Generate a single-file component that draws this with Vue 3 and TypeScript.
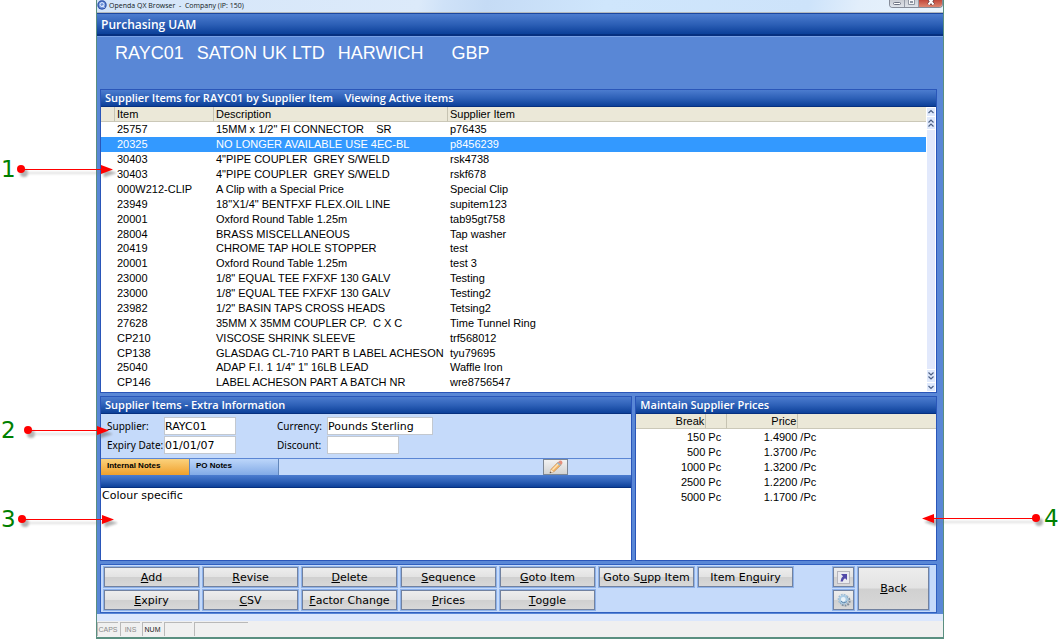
<script setup lang="ts">
import { ref } from 'vue'

interface Item { code: string; description: string; supplierItem: string }
interface PriceBreak { qty: string; price: string }
interface Action { id: string; before: string; key: string; after: string }
interface Callout { label: string; cls: string; length: number; reverse: boolean }

const items: Item[] = [
  { code: '25757', description: '15MM x 1/2" FI CONNECTOR    SR', supplierItem: 'p76435' },
  { code: '20325', description: 'NO LONGER AVAILABLE USE 4EC-BL', supplierItem: 'p8456239' },
  { code: '30403', description: '4"PIPE COUPLER  GREY S/WELD', supplierItem: 'rsk4738' },
  { code: '30403', description: '4"PIPE COUPLER  GREY S/WELD', supplierItem: 'rskf678' },
  { code: '000W212-CLIP', description: 'A Clip with a Special Price', supplierItem: 'Special Clip' },
  { code: '23949', description: '18"X1/4" BENTFXF FLEX.OIL LINE', supplierItem: 'supitem123' },
  { code: '20001', description: 'Oxford Round Table 1.25m', supplierItem: 'tab95gt758' },
  { code: '28004', description: 'BRASS MISCELLANEOUS', supplierItem: 'Tap washer' },
  { code: '20419', description: 'CHROME TAP HOLE STOPPER', supplierItem: 'test' },
  { code: '20001', description: 'Oxford Round Table 1.25m', supplierItem: 'test 3' },
  { code: '23000', description: '1/8" EQUAL TEE FXFXF 130 GALV', supplierItem: 'Testing' },
  { code: '23000', description: '1/8" EQUAL TEE FXFXF 130 GALV', supplierItem: 'Testing2' },
  { code: '23982', description: '1/2" BASIN TAPS CROSS HEADS', supplierItem: 'Tetsing2' },
  { code: '27628', description: '35MM X 35MM COUPLER CP.  C X C', supplierItem: 'Time Tunnel Ring' },
  { code: 'CP210', description: 'VISCOSE SHRINK SLEEVE', supplierItem: 'trf568012' },
  { code: 'CP138', description: 'GLASDAG CL-710 PART B LABEL ACHESON', supplierItem: 'tyu79695' },
  { code: '25040', description: 'ADAP F.I. 1 1/4" 1" 16LB LEAD', supplierItem: 'Waffle Iron' },
  { code: 'CP146', description: 'LABEL ACHESON PART A BATCH NR', supplierItem: 'wre8756547' },
]

const prices: PriceBreak[] = [
  { qty: '150', price: '1.4900' },
  { qty: '500', price: '1.3700' },
  { qty: '1000', price: '1.3200' },
  { qty: '2500', price: '1.2200' },
  { qty: '5000', price: '1.1700' },
]

const actions: Action[] = [
  { id: 'add', before: '', key: 'A', after: 'dd' },
  { id: 'revise', before: '', key: 'R', after: 'evise' },
  { id: 'delete', before: '', key: 'D', after: 'elete' },
  { id: 'sequence', before: '', key: 'S', after: 'equence' },
  { id: 'goto-item', before: '', key: 'G', after: 'oto Item' },
  { id: 'goto-supp', before: 'Goto S', key: 'u', after: 'pp Item' },
  { id: 'enquiry', before: 'Item En', key: 'q', after: 'uiry' },
  { id: 'expiry', before: '', key: 'E', after: 'xpiry' },
  { id: 'csv', before: '', key: 'C', after: 'SV' },
  { id: 'factor', before: '', key: 'F', after: 'actor Change' },
  { id: 'prices', before: '', key: 'P', after: 'rices' },
  { id: 'toggle', before: '', key: 'T', after: 'oggle' },
]

const callouts: Callout[] = [
  { label: '1', cls: 'c1', length: 92, reverse: false },
  { label: '2', cls: 'c2', length: 81, reverse: false },
  { label: '3', cls: 'c3', length: 92, reverse: false },
  { label: '4', cls: 'c4', length: 114, reverse: true },
]

const selected = ref(1)
const tab = ref<'internal' | 'po'>('internal')
const supplier = ref('RAYC01')
const expiry = ref('01/01/07')
const currency = ref('Pounds Sterling')
const discount = ref('')
const notes = ref('Colour specific')
</script>

<template>
  <div class="page">
    <div class="window">
      <header class="titlebar">
        <svg class="logo" width="10" height="10" viewBox="0 0 10 10" aria-hidden="true">
          <circle cx="5" cy="5" r="4.7" fill="#2d50a8" />
          <circle cx="5" cy="5" r="3.4" fill="#6d92d8" />
          <path d="M3 4.6a2 2 0 1 0 4 0a2 2 0 1 0 -4 0M5.3 5.4L7.4 7.8" fill="none" stroke="#e4edff" />
        </svg>
        <span class="caption">Openda QX Browser&nbsp; -&nbsp; Company (IP: 150)</span>
        <div class="controls">
          <button type="button" class="ctl min" aria-label="Minimise">
            <svg width="14" height="7" viewBox="0 0 14 7"><rect x="3.5" y="2.5" width="7" height="2" rx="1" fill="#fff" stroke="#6b7180" /></svg>
          </button>
          <button type="button" class="ctl max" aria-label="Maximise">
            <svg width="13" height="7" viewBox="0 0 13 7"><path d="M3.500 0V4.500H9.500V0" fill="#f5f6f8" stroke="#8f96a3" /><rect x="5.500" y="1.500" width="2" height="1" fill="none" stroke="#8f96a3" /></svg>
          </button>
          <button type="button" class="ctl close" aria-label="Close">
            <svg width="23" height="7" viewBox="0 0 23 7"><path d="M9.500 -1.500L14.500 4.500M14.500 -1.500L9.500 4.500" stroke="#5b3038" stroke-width="3.400" /><path d="M9.500 -1.500L14.500 4.500M14.500 -1.500L9.500 4.500" stroke="#fff" stroke-width="2" /></svg>
          </button>
        </div>
      </header>

      <main class="client">
        <h1 class="bar main-bar">Purchasing UAM</h1>
        <p class="account"><span>RAYC01</span><span>SATON UK LTD</span><span>HARWICH</span><span class="code">GBP</span></p>

        <div class="body">
          <section class="panel">
            <h2 class="bar">Supplier Items for RAYC01 by Supplier Item&nbsp;&nbsp;&nbsp; Viewing Active items</h2>
            <div class="list">
              <table class="grid items">
                <colgroup><col class="w-gutter" /><col class="w-item" /><col class="w-desc" /><col /></colgroup>
                <thead>
                  <tr><th></th><th>Item</th><th>Description</th><th>Supplier Item</th></tr>
                </thead>
                <tbody>
                  <tr v-for="(row, i) in items" :key="i" :class="{ selected: i === selected }" @click="selected = i">
                    <td></td><td>{{ row.code }}</td><td>{{ row.description }}</td><td>{{ row.supplierItem }}</td>
                  </tr>
                </tbody>
              </table>
              <div class="scroll">
                <button type="button" aria-label="Scroll up"><svg width="8" height="8" viewBox="0 0 8 8"><path d="M1.500 5L4 2.500L6.500 5" /></svg></button>
                <button type="button" class="page-btn" aria-label="Page up"><svg width="8" height="10" viewBox="0 0 8 10"><path d="M1.500 4.500L4 2L6.500 4.500M1.500 8.500L4 6L6.500 8.500" /></svg></button>
                <div class="track"></div>
                <button type="button" class="page-btn" aria-label="Page down"><svg width="8" height="10" viewBox="0 0 8 10"><path d="M1.500 1.500L4 4L6.500 1.500M1.500 5.500L4 8L6.500 5.500" /></svg></button>
                <button type="button" aria-label="Scroll down"><svg width="8" height="8" viewBox="0 0 8 8"><path d="M1.500 3L4 5.500L6.500 3" /></svg></button>
              </div>
            </div>
          </section>

          <div class="lower">
            <section class="panel extra">
              <h2 class="bar">Supplier Items - Extra Information</h2>
              <form class="fields" @submit.prevent>
                <label for="supplier">Supplier:</label><input id="supplier" v-model="supplier" class="short" type="text" />
                <label for="currency">Currency:</label><input id="currency" v-model="currency" type="text" />
                <label for="expiry">Expiry Date:</label><input id="expiry" v-model="expiry" class="short" type="text" />
                <label for="discount">Discount:</label><input id="discount" v-model="discount" class="short" type="text" />
              </form>
              <div class="tabs">
                <button type="button" class="tab" :class="{ active: tab === 'internal' }" @click="tab = 'internal'">Internal Notes</button>
                <button type="button" class="tab" :class="{ active: tab === 'po' }" @click="tab = 'po'">PO Notes</button>
                <button type="button" class="edit" aria-label="Edit notes">
                  <svg width="16" height="14" viewBox="0 0 16 14">
                    <path d="M2 13L3.200 9.200L10 2.200L13.200 4.800L6 11.600Z" fill="#f5b768" stroke="#c98a4a" stroke-width=".7" />
                    <path d="M4.500 9.800L11 3.200" stroke="#fde3b4" stroke-width="1.500" />
                    <path d="M2 13L3 9.600L5.600 11.700Z" fill="#f2e3cf" />
                    <path d="M1.700 13.200L2.300 11.600L3.600 12.600Z" fill="#4a4a50" />
                    <path d="M10 2.200L11.600 .8Q13 .2 14 1.300Q14.800 2.600 14.200 3.800L13.200 4.800Z" fill="#e58f7c" />
                    <path d="M9.400 2.800L12.600 5.400" stroke="#8fb6d4" stroke-width="1.300" />
                  </svg>
                </button>
              </div>
              <div class="bar notes-bar"></div>
              <textarea v-model="notes" class="notes" aria-label="Notes"></textarea>
            </section>

            <section class="panel">
              <h2 class="bar">Maintain Supplier Prices</h2>
              <div class="price-list">
                <table class="grid prices">
                  <colgroup><col class="w-break" /><col class="w-unit" /><col class="w-price" /><col /></colgroup>
                  <thead>
                    <tr><th class="num">Break</th><th></th><th class="num">Price</th><th></th></tr>
                  </thead>
                  <tbody>
                    <tr v-for="p in prices" :key="p.qty">
                      <td class="num">{{ p.qty }}</td><td>Pc</td><td class="num">{{ p.price }}</td><td>/Pc</td>
                    </tr>
                  </tbody>
                </table>
              </div>
            </section>
          </div>

          <section class="panel toolbar">
            <div class="actions">
              <button v-for="a in actions" :key="a.id" type="button" class="btn">{{ a.before }}<u>{{ a.key }}</u>{{ a.after }}</button>
            </div>
            <div class="tools">
              <button type="button" class="btn" aria-label="Shortcut">
                <svg width="13" height="13" viewBox="0 0 13 13">
                  <rect x=".5" y=".5" width="12" height="12" fill="#e9e9ef" stroke="#b5b5bd" />
                  <path d="M4 3H10V9L8 7.200Q6.200 8.200 5.800 10.500H3.500Q3.400 7 6 5.200Z" fill="#5148a8" />
                </svg>
              </button>
              <button type="button" class="btn" aria-label="Settings">
                <svg width="14" height="14" viewBox="0 0 14 14">
                  <circle cx="8" cy="8" r="4.600" fill="none" stroke="#7f8f9f" stroke-width="2" stroke-dasharray="1.800 1" />
                  <circle cx="6.300" cy="6.300" r="4.800" fill="none" stroke="#9dbcd6" stroke-width="1.600" stroke-dasharray="1.800 1" />
                  <circle cx="6.300" cy="6.300" r="3.400" fill="#eaf3f9" stroke="#a9cbe4" stroke-width="2" />
                  <path d="M4 8a3.400 3.400 0 0 0 5.600 .4" fill="none" stroke="#5f86aa" />
                </svg>
              </button>
            </div>
            <button type="button" class="btn back"><span><u>B</u>ack</span></button>
          </section>
        </div>
      </main>

      <footer class="status">
        <span class="cell caps">CAPS</span><span class="cell">INS</span><span class="cell on">NUM</span>
        <span class="cell blank"></span><span class="cell wide"></span>
      </footer>
    </div>

    <div v-for="c in callouts" :key="c.label" class="callout" :class="[c.cls, { reverse: c.reverse }]">
      <span>{{ c.label }}</span>
      <svg :width="c.length + 12" height="20" :viewBox="`0 0 ${c.length + 12} 20`" aria-hidden="true">
        <g :transform="c.reverse ? `translate(${c.length + 8} 0) scale(-1 1)` : 'translate(0 0)'">
          <g class="shadow" :transform="c.reverse ? 'translate(-3 4)' : 'translate(3 4)'">
            <circle cx="4" cy="8" r="4" /><path :d="`M4 8H${c.length}`" /><path class="head" :d="`M${c.length - 8} 4L${c.length + 4} 8L${c.length - 8} 12Z`" />
          </g>
          <g class="arrow">
            <circle cx="4" cy="8" r="4" /><rect x="4" y="8" :width="c.length - 6" height="1" /><path class="head" :d="`M${c.length - 8} 4L${c.length + 4} 8.500L${c.length - 8} 13Z`" />
          </g>
        </g>
      </svg>
    </div>
  </div>
</template>

<style>
body { margin: 0; background: #fff; }
</style>

<style scoped>
* { box-sizing: border-box; }
.page { position: relative; display: flex; min-height: 100vh; padding: 0 117px 0 96px; font-family: "Liberation Sans", Arial, sans-serif; font-size: 11px; color: #000; overflow: hidden; }
button, input, textarea { font: inherit; color: inherit; margin: 0; padding: 0; border-radius: 0; }
h1, h2, p { margin: 0; }
.window { flex: 1; min-width: 0; display: flex; flex-direction: column; border: solid #5a8f80; border-width: 0 1px 2px; background: #5987d6; }

.titlebar { display: flex; height: 13px; align-items: flex-start; background: linear-gradient(100deg, #d4e5f9 0%, #dceafa 38%, #cfe2f8 41%, #c5dbf5 46%, #cfe6fc 60%, #cde3fa 84%, #e2eefb 90%, #eaf4fd 100%); border-bottom: 1px solid #b4b9bc; }
.logo { margin-right: 2px; }
.caption { flex: 1; font-family: "Segoe UI", "Open Sans", sans-serif; font-size: 7px; line-height: 11px; color: #101820; white-space: nowrap; }
.controls { display: flex; height: 8px; border: 1px solid #858b98; border-top: 0; border-radius: 0 0 4px 4px; overflow: hidden; }
.ctl { display: flex; height: 7px; border: 0; border-right: 1px solid #959ba8; background: linear-gradient(#c9ccd3, #dfe3ea); }
.ctl.close { border-right: 0; background: linear-gradient(#c2473b, #dd8670); }

.client { flex: 1; display: flex; flex-direction: column; }
.bar { height: 17px; padding-left: 4px; background: linear-gradient(#4c7ccf, #2c5fb6 50%, #0c4099 94%, #06307f 95%); color: #fff; font-family: "Trebuchet MS", "Open Sans", sans-serif; font-size: 11px; font-weight: 600; line-height: 16px; white-space: nowrap; }
.main-bar { height: 23px; font-size: 12px; line-height: 21px; border-top: 1px solid #1c479f; border-bottom: 1px solid #062f80; }
.account { display: flex; gap: 13px; height: 53px; padding-left: 18px; border-top: 1px solid #79a0e4; color: #fff; font-size: 18px; line-height: 33px; white-space: nowrap; }
.code { margin-left: 15px; }

.body { flex: 1; display: flex; flex-direction: column; gap: 3px; padding: 0 6px 1px 3px; }
.panel { display: flex; flex-direction: column; min-width: 0; border: 1px solid #2a56b9; background: #fff; }
.list { display: flex; align-items: flex-start; }
.grid { border-collapse: separate; border-spacing: 0; table-layout: fixed; line-height: 14px; cursor: default; }
.grid th, .grid td { padding: 0 2px; text-align: left; font-weight: 400; white-space: pre; overflow: visible; }
.grid th { height: 15px; background: #ebe8d8; border-right: 1px solid #c6c3b2; border-bottom: 1px solid #cbc8b8; }
.grid th:last-child { border-right: 0; }
.grid .num { text-align: right; padding-right: 1px; }
.items { flex: 1; height: 283px; margin-bottom: 2px; }
.items td:nth-child(3), .items th:nth-child(3) { padding: 0 0 0 2px; }
.selected td { background: #3399ff; color: #fff; }
.w-gutter { width: 14px; }
.w-item { width: 99px; }
.w-desc { width: 234px; }
.w-break { width: 70px; }
.w-unit { width: 21px; }
.w-price { width: 71px; }
.prices { width: 100%; }
.prices td { height: 15px; }

.scroll { align-self: stretch; display: flex; flex-direction: column; width: 10px; padding: 1px; gap: 1px; }
.scroll button { display: flex; border: 0; width: 8px; height: 8px; background: #dfe9fc; }
.scroll .page-btn { height: 12px; align-items: center; }
.scroll path { fill: none; stroke: #4d6185; stroke-width: 1.2; }
.track { flex: 1; background: #e2e9fc; }

.lower { flex: 1; display: grid; grid-template-columns: minmax(0, 533fr) minmax(0, 302fr); gap: 3px; }
.fields { display: grid; grid-template-columns: 57px 113px 50px 106px; row-gap: 1px; height: 44px; padding: 3px 0 0 6px; background: #c5dafa; align-content: start; }
.fields label { font-family: Tahoma, "Noto Sans", sans-serif; font-size: 10px; line-height: 18px; white-space: nowrap; }
.fields input { width: 106px; height: 18px; padding: 0; border: 1px solid #c3c8cf; background: #fff; font-family: Verdana, "DejaVu Sans", sans-serif; font-size: 11px; }
.fields .short { width: 72px; }
.tabs { display: flex; height: 17px; border-top: 1px solid #5b86d4; background: #c5dafa; }
.tab { width: 89px; padding: 0 6px 3px; border: 0; border-right: 1px solid #6287bb; background: linear-gradient(#bcd6fa, #82aae6); text-align: left; font-size: 8px; font-weight: 700; }
.tab.active { background: linear-gradient(#fbd27c, #f0a02c); }
.edit { display: flex; align-items: center; justify-content: center; width: 25px; margin: 0 63px 0 auto; border: 1px solid #7d8794; background: linear-gradient(#f2f2f2, #d3d3d3); }
.notes-bar { height: 13px; }
.notes { flex: 1; display: block; width: 100%; min-height: 60px; padding: 1px; border: 0; resize: none; outline: 0; font-family: Verdana, "DejaVu Sans", sans-serif; font-size: 11px; line-height: 14px; }
.price-list { flex: 1; }

.toolbar { flex-direction: row; height: 49px; padding: 2px 7px 2px 3px; background: #c5dafa; border-color: #2f5fc0; }
.actions { display: grid; grid-template-columns: repeat(7, 95px); grid-auto-rows: 20px; gap: 3px 4px; flex: 1; }
.btn { display: flex; align-items: center; justify-content: center; border: 1px solid #71819f; outline: 1px solid #8eb2ea; background: linear-gradient(#ededed, #e3e3e3 48%, #d0d0d0 52%, #d8d8d8); font-family: Verdana, "DejaVu Sans", sans-serif; font-size: 11px; white-space: pre; }
.tools { display: grid; grid-template-columns: 21px; grid-auto-rows: 20px; row-gap: 3px; margin-right: 4px; }
.back { width: 71px; height: 43px; }

.status { display: flex; gap: 2px; height: 23px; padding-top: 8px; background: linear-gradient(#dbe7fd 7px, #f0f0f0 7px); }
.cell { width: 20px; height: 14px; border: solid #b9b9b9; border-width: 1px 0 0 1px; color: #8b8b8b; font-size: 7px; line-height: 13px; text-align: center; }
.caps { width: 21px; }
.on { color: #222; }
.blank { width: 28px; }
.wide { width: 54px; }

.callout { position: absolute; display: flex; align-items: center; height: 20px; font-family: Verdana, "DejaVu Sans", sans-serif; font-size: 23px; line-height: 20px; color: #008000; }
.callout.reverse { flex-direction: row-reverse; }
.callout span { width: 14px; text-align: center; margin-bottom: 4px; }
.callout svg { overflow: visible; }
.c1 { left: 1px; top: 161px; gap: 2px; }
.c2 { left: 1px; top: 422px; gap: 9px; }
.c3 { left: 1px; top: 511px; gap: 3px; }
.c4 { right: 3px; top: 510px; }
.arrow { fill: #f00; }
.shadow { fill: #555; stroke: none; opacity: .45; filter: blur(1px); }
.shadow path { stroke: #777; stroke-width: 1; }
</style>
